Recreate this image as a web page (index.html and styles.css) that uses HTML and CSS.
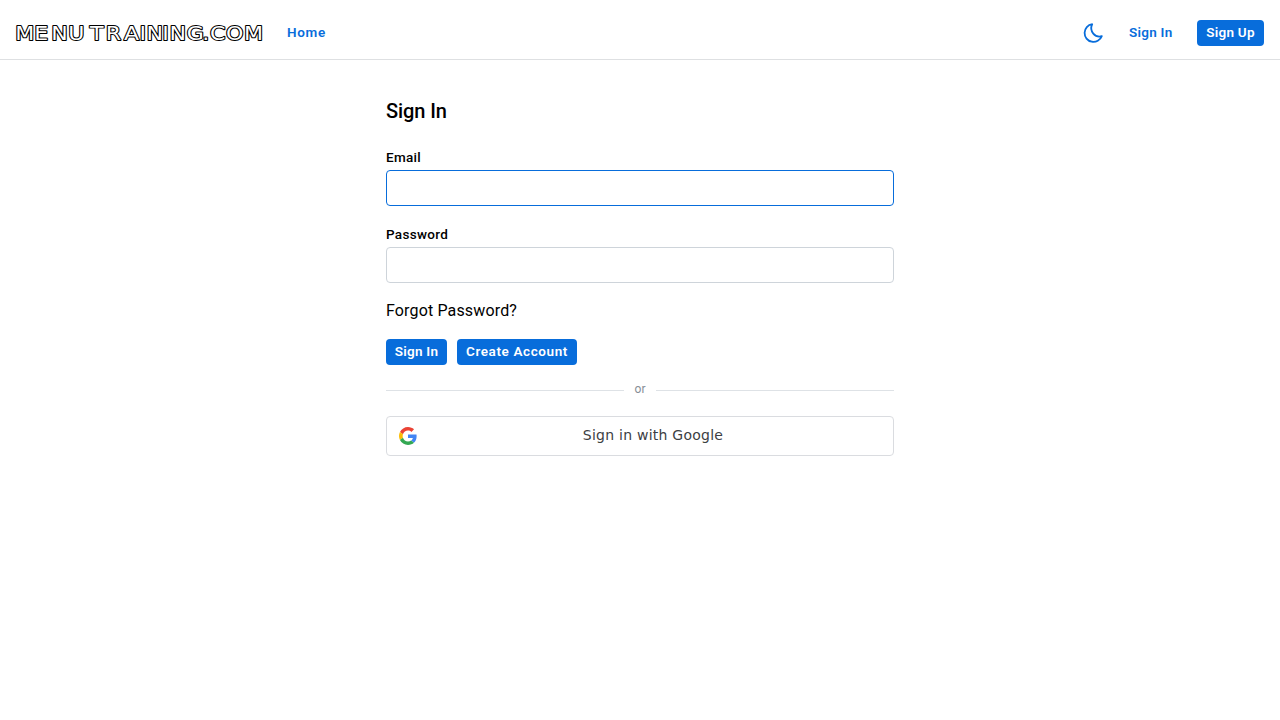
FILE: index.html
```html
<!DOCTYPE html>
<html lang="en">
<head>
<meta charset="utf-8">
<title>Sign In</title>
<link rel="stylesheet" href="styles.css">
</head>
<body>
<header class="bar">
  <svg class="logo" width="248" height="22" viewBox="0 0 248 22" role="img" aria-label="Menu Training.com">
    <text transform="scale(1.15 1)" y="18" x="-.7 15.8 30.6 45.4 57.4 64.4 78 94 107.3 113.4 127.2 133.4 148.4 161.9 168.7 182.6 198.2">MENU TRAINING.COM</text>
  </svg>
  <a class="link home">Home</a>
  <svg class="moon" width="24" height="24" viewBox="0 0 24 24" fill="none" stroke="#086ddb" stroke-width="1.8" stroke-linejoin="round"><path d="M11.2 3.2A8.9 8.9 0 1 0 20.8 15.2C14.2 17.1 7.9 10.4 11.2 3.2Z"/></svg>
  <a class="link signin">Sign In</a>
  <button class="btn signup">Sign Up</button>
</header>
<main class="panel">
  <h1>Sign In</h1>
  <form>
    <label class="email" for="email">Email</label>
    <input id="email" class="field active" type="email">
    <label class="password" for="password">Password</label>
    <input id="password" class="field" type="password">
    <a class="forgot">Forgot Password?</a>
    <div class="actions">
      <button type="button" class="btn submit">Sign In</button>
      <button type="button" class="btn create">Create Account</button>
    </div>
  </form>
  <div class="divider"><span>or</span></div>
  <button class="google">
    <svg width="18" height="18" viewBox="0 0 48 48"><path fill="#EA4335" d="M24 9.5c3.54 0 6.71 1.22 9.21 3.6l6.85-6.85C35.9 2.38 30.47 0 24 0 14.62 0 6.51 5.38 2.56 13.22l7.98 6.19C12.43 13.72 17.74 9.5 24 9.5z"/><path fill="#4285F4" d="M46.98 24.55c0-1.57-.15-3.09-.38-4.55H24v9.02h12.94c-.58 2.96-2.26 5.48-4.78 7.18l7.73 6c4.51-4.18 7.09-10.36 7.09-17.65z"/><path fill="#FBBC05" d="M10.53 28.59c-.48-1.45-.76-2.99-.76-4.59s.27-3.14.76-4.59l-7.98-6.19C.92 16.46 0 20.12 0 24c0 3.88.92 7.54 2.56 10.78l7.97-6.19z"/><path fill="#34A853" d="M24 48c6.48 0 11.93-2.13 15.89-5.81l-7.73-6c-2.15 1.45-4.92 2.3-8.16 2.3-6.26 0-11.57-4.22-13.47-9.91l-7.98 6.19C6.51 42.62 14.62 48 24 48z"/></svg>
    <span>Sign in with Google</span>
  </button>
</main>
</body>
</html>
```
FILE: styles.css
```css
* { box-sizing: border-box; }
body { margin: 0; background: #fff; color: #000; font-family: Roboto, "Liberation Sans", sans-serif; }
.bar { display: flex; align-items: center; height: 60px; padding: 6px 16px 0; border-bottom: 1px solid #dee0e2; }
.logo { display: block; overflow: visible; }
.logo text { font: 19.2px "DejaVu Sans", sans-serif; fill: #fff; stroke: #000; stroke-width: 2px; stroke-linejoin: round; paint-order: stroke; }
.link { color: #086ddb; font-size: 13.5px; font-weight: 600; line-height: 20px; white-space: nowrap; }
.home { margin: -1px 0 0 23px; letter-spacing: .7px; }
.moon { margin-left: auto; margin-top: 1px; }
.signin { width: 43px; margin: -1px 25px 0 24px; letter-spacing: .25px; }
.btn { height: 26px; padding: 0 0 1px; border: 0; border-radius: 4px; background: #086ddb; color: #fff; font: 600 13.5px/24px Roboto, sans-serif; letter-spacing: .25px; white-space: nowrap; }
.signup { width: 67px; }
.submit { width: 61px; padding-bottom: 2px; }
.create { width: 120px; padding-bottom: 2px; letter-spacing: .6px; }
.panel { width: 508px; margin: 0 auto; padding-top: 37px; }
h1 { margin: 0; font-size: 20px; font-weight: 500; line-height: 28px; letter-spacing: -.1px; }
form { display: flex; flex-direction: column; padding-top: 22px; }
label { font-size: 13.5px; font-weight: 500; line-height: 21px; letter-spacing: .3px; }
.field { height: 36px; width: 100%; margin: 2px 0 18px; border: 1px solid #ced4da; border-radius: 4px; background: #fff; outline: 0; }
.field.active { border-color: #086ddb; }
.forgot { font-size: 16px; line-height: 24px; margin-top: -2px; letter-spacing: .15px; }
.actions { display: flex; gap: 10px; margin-top: 16px; }
.divider { display: flex; align-items: center; gap: 10px; height: 18px; margin-top: 16px; color: #868e96; font-size: 12px; line-height: 16px; }
.divider span { width: 12px; margin-top: -2px; text-align: center; }
.divider::before, .divider::after { content: ""; flex: 1; height: 1px; background: #dee2e6; }
.google { display: flex; align-items: center; width: 508px; height: 40px; margin-top: 17px; padding: 0 12px; border: 1px solid #dadce0; border-radius: 4px; background: #fff; color: #3c4043; font: 14px "DejaVu Sans", sans-serif; letter-spacing: .25px; }
.google span { flex: 1; padding: 0 0 2px 8px; text-align: center; }
```
